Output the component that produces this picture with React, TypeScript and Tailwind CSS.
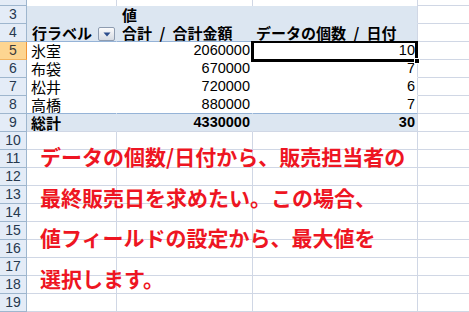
import React from "react";

type Row = {
  n: number;
  a?: React.ReactNode;
  b?: React.ReactNode;
  c?: React.ReactNode;
  kind: "grid" | "pivHead" | "pivHead4" | "body" | "bodyLast" | "total";
  active?: boolean;
};

const rows: Row[] = [
  { n: 3, kind: "pivHead", b: <span className="font-bold pl-[5px]">値</span> },
  {
    n: 4,
    kind: "pivHead4",
    a: (
      <>
        <span className="font-bold pl-[5px]">行ラベル</span>
        <DropButton />
      </>
    ),
    b: (
      <span className="font-bold pl-[5px] whitespace-nowrap">
        合計 <span className="px-[4px]">/</span> 合計金額
      </span>
    ),
    c: (
      <span className="font-bold pl-[3px] whitespace-nowrap">
        データの個数 <span className="px-[4px]">/</span> 日付
      </span>
    ),
  },
  { n: 5, kind: "body", a: "氷室", b: "2060000", c: "10", active: true },
  { n: 6, kind: "body", a: "布袋", b: "670000", c: "7" },
  { n: 7, kind: "body", a: "松井", b: "720000", c: "6" },
  { n: 8, kind: "bodyLast", a: "高橋", b: "880000", c: "7" },
  { n: 9, kind: "total", a: "総計", b: "4330000", c: "30" },
  ...[10, 11, 12, 13, 14, 15, 16, 17, 18, 19].map((n) => ({ n, kind: "grid" as const })),
];

function DropButton() {
  return (
    <span className="ml-auto mr-[1px] mb-[0px] flex h-[14px] w-[17px] items-center justify-center rounded-[2px] border border-[#8e9cb0] bg-gradient-to-b from-[#fbfbfc] to-[#d6dbe3]">
      <svg width="8" height="5" viewBox="0 0 8 5">
        <path d="M0.5 0.5 L7.5 0.5 L4 4.5 Z" fill="#2c4d8c" />
      </svg>
    </span>
  );
}

function RowHead({ n, active }: { n: number; active?: boolean }) {
  return (
    <div
      className={
        active
          ? "flex w-[27px] shrink-0 items-end justify-center border-r border-b border-r-[#f29536] border-b-[#f2b35f] bg-[#fdd591] text-[14px] leading-[17px] text-[#3b3b3b] font-['Liberation_Sans',sans-serif]"
          : "flex w-[27px] shrink-0 items-end justify-center border-r border-b border-[#9eb6ce] bg-[#e4ecf7] text-[14px] leading-[17px] text-[#27394f] font-['Liberation_Sans',sans-serif]"
      }
    >
      {n}
    </div>
  );
}

function cellClasses(kind: Row["kind"], col: "a" | "b" | "c") {
  const base = "flex shrink-0 items-end overflow-visible";
  const w = col === "a" ? " w-[90px]" : col === "b" ? " w-[136px]" : " w-[165px]";
  const rightGrid = col === "c";
  switch (kind) {
    case "pivHead":
      return base + w + " bg-[#dce6f1] border-b border-b-[#dce6f1] border-r" + (rightGrid ? " border-r-[#d0d7e5]" : " border-r-[#dce6f1]");
    case "pivHead4":
      return base + w + " bg-[#dce6f1] border-b border-b-[#95b3d7] border-r" + (rightGrid ? " border-r-[#d0d7e5]" : " border-r-[#dce6f1]");
    case "body":
      return base + w + " bg-white border-b border-b-white border-r" + (rightGrid ? " border-r-[#d0d7e5]" : " border-r-white");
    case "bodyLast":
      return base + w + " bg-white border-b border-b-[#95b3d7] border-r" + (rightGrid ? " border-r-[#d0d7e5]" : " border-r-white");
    case "total":
      return base + w + " bg-[#dce6f1] border-b border-b-[#d0d7e5] border-r" + (rightGrid ? " border-r-[#d0d7e5]" : " border-r-[#dce6f1]");
    default:
      return base + w + " bg-white border-b border-r border-[#d0d7e5]";
  }
}

function Num({ v, bold }: { v?: React.ReactNode; bold?: boolean }) {
  return (
    <span
      className={
        (bold ? "font-bold " : "") +
        "ml-auto pr-[2px] text-[14.5px] font-['Liberation_Sans',sans-serif]"
      }
    >
      {v}
    </span>
  );
}

export default function App() {
  return (
    <div className="relative h-[312px] w-[469px] overflow-hidden bg-white text-[15px] leading-[17px] text-black font-['Noto_Sans_CJK_JP',sans-serif]">
      {/* row 2 (cut off) */}
      <div className="flex h-[6px]">
        <div className="w-[27px] shrink-0 border-r border-b border-[#9eb6ce] bg-[#e4ecf7]" />
        <div className="w-[90px] shrink-0 border-r border-[#d0d7e5]" />
        <div className="w-[136px] shrink-0 border-r border-[#d0d7e5]" />
        <div className="w-[165px] shrink-0 border-r border-[#d0d7e5]" />
        <div className="flex-1 border-b border-[#d0d7e5]" />
      </div>

      {rows.map((r) => {
        const numeric = r.kind === "body" || r.kind === "bodyLast" || r.kind === "total";
        const bold = r.kind === "total";
        return (
          <div key={r.n} className="flex h-[18px]">
            <RowHead n={r.n} active={r.active} />
            <div className={cellClasses(r.kind, "a")}>
              {numeric ? (
                <span className={(bold ? "font-bold " : "") + "pl-[4px]"}>{r.a}</span>
              ) : (
                r.a
              )}
            </div>
            <div className={cellClasses(r.kind, "b")}>
              {numeric ? <Num v={r.b} bold={bold} /> : r.b}
            </div>
            <div className={cellClasses(r.kind, "c")}>
              {numeric ? <Num v={r.c} bold={bold} /> : r.c}
            </div>
            <div className="flex-1 border-b border-[#d0d7e5] bg-white" />
          </div>
        );
      })}

      {/* active cell C5 */}
      <div className="absolute left-[251px] top-[41px] h-[21px] w-[167px] border-[3px] border-t-2 border-black" />
      <div className="absolute left-[414px] top-[58px] h-[6px] w-[6px] border border-white bg-black" />

      {/* text box */}
      <div className="absolute left-[40px] top-[136px] whitespace-nowrap text-[21px] font-bold leading-[40.5px] text-[#ee1522]">
        <div>データの個数/日付から、販売担当者の</div>
        <div>最終販売日を求めたい。この場合、</div>
        <div>値フィールドの設定から、最大値を</div>
        <div>選択します。</div>
      </div>
    </div>
  );
}
